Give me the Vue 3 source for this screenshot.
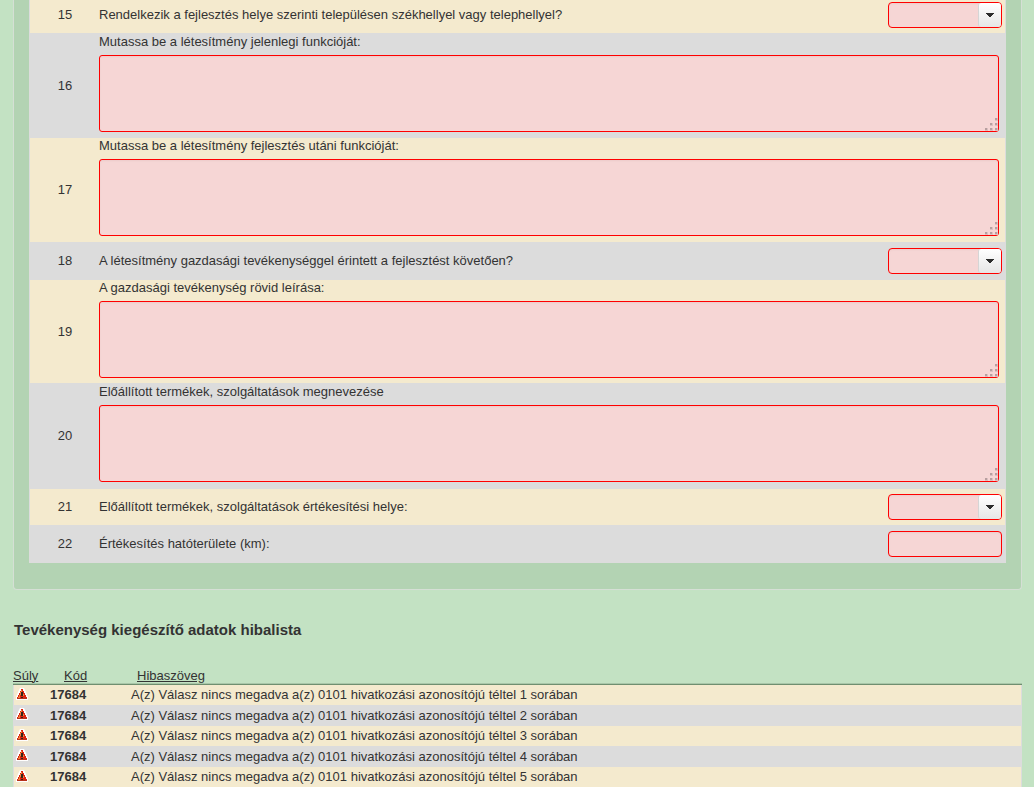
<script setup>
const rows = [
  { n: 15, label: 'Rendelkezik a fejlesztés helye szerinti településen székhellyel vagy telephellyel?', type: 'select' },
  { n: 16, label: 'Mutassa be a létesítmény jelenlegi funkcióját:', type: 'area' },
  { n: 17, label: 'Mutassa be a létesítmény fejlesztés utáni funkcióját:', type: 'area' },
  { n: 18, label: 'A létesítmény gazdasági tevékenységgel érintett a fejlesztést követően?', type: 'select' },
  { n: 19, label: 'A gazdasági tevékenység rövid leírása:', type: 'area' },
  { n: 20, label: 'Előállított termékek, szolgáltatások megnevezése', type: 'area' },
  { n: 21, label: 'Előállított termékek, szolgáltatások értékesítési helye:', type: 'select' },
  { n: 22, label: 'Értékesítés hatóterülete (km):', type: 'input' },
]
const errors = [1, 2, 3, 4, 5]
const dots = [[10, 0], [5, 5], [10, 5], [0, 10], [5, 10], [10, 10]]
</script>

<template>
  <main class="page">
    <section class="panel">
      <div class="grid">
        <div v-for="r in rows" :key="r.n" class="row" :class="r.type">
          <span class="num">{{ r.n }}</span>
          <div class="cell">
            <label :for="'f' + r.n">{{ r.label }}</label>
            <div v-if="r.type === 'area'" class="areabox">
              <textarea :id="'f' + r.n"></textarea>
              <svg class="grip" width="13" height="13" viewBox="0 0 13 13" aria-hidden="true">
                <g v-for="d in dots" :key="d.join()">
                  <rect :x="d[0]" :y="d[1]" width="3" height="3" fill="#dcc0c0" />
                  <rect :x="d[0]" :y="d[1]" width="2" height="2" fill="#b79f9f" />
                </g>
              </svg>
            </div>
            <div v-else-if="r.type === 'select'" class="selectbox">
              <select :id="'f' + r.n"><option value=""></option></select>
              <span class="trigger">
                <svg width="8" height="4" viewBox="0 0 8 4" aria-hidden="true"><path d="M0 0h8v1H7v1H6v1H5v1H3V3H2V2H1V1H0z" fill="#2b2b2b" /></svg>
              </span>
            </div>
            <input v-else :id="'f' + r.n" type="text" class="field" />
          </div>
        </div>
      </div>
    </section>

    <h2>Tevékenység kiegészítő adatok hibalista</h2>

    <table>
      <thead>
        <tr>
          <th class="c1"><a href="#">Súly</a></th>
          <th class="c2"><a href="#">Kód</a></th>
          <th class="c3"><a href="#">Hibaszöveg</a></th>
        </tr>
      </thead>
      <tbody>
        <tr v-for="e in errors" :key="e">
          <td class="icon">
            <svg width="12" height="12" viewBox="0 0 12 12" role="img" aria-label="Hiba">
              <path d="M4 0h4l1 2 1 2 1 3 1 2v3H0V9l1-2 1-3 1-2z" fill="#fff" />
              <path d="M5 1h2v2h1v2h1v2h1v2h1v2H1V9h1V7h1V5h1V3h1z" fill="#dd2410" />
              <path d="M5 2h1v2H5zM4 4h1v3H4zM3 7h1v2H3zM2 9h2v1H2zM7 6h1v2H7z" fill="#f0813a" />
              <path d="M1 10h10v1H1z" fill="#b8321c" />
              <path d="M5 4h2v4H5zM5 9h2v1H5z" fill="#33241c" />
            </svg>
          </td>
          <td class="code">17684</td>
          <td>A(z) Válasz nincs megadva a(z) 0101 hivatkozási azonosítójú téltel {{ e }} sorában</td>
        </tr>
      </tbody>
    </table>
  </main>
</template>

<style>
body { margin: 0; background: #c3e2c3; }
</style>

<style scoped>
.page {
  font: 13px/16px "Liberation Sans", Arial, sans-serif;
  color: #333;
  padding: 0 12px 0 13px;
}
.page * { box-sizing: border-box; }
.panel {
  background: #b3d3b3;
  border: 1px solid #d5dfd5;
  border-top: 0;
  border-radius: 0 0 4px 4px;
  padding: 0 15px 26px;
}
.grid { border: 1px solid #dcdcdc; border-top: 0; }
.row {
  display: grid;
  grid-template-columns: 69px 1fr;
  align-items: center;
  height: 37px;
  background: #f4eace;
  border-top: 1px solid #dcdcdc;
}
.row:nth-child(even) { background: #dcdcdc; }
.row:first-child { height: 33px; padding-bottom: 4px; border-top: 0; }
.row.area { height: 104px; }
.row.area + .row.area { height: 105px; }
.num { text-align: center; padding-left: 1px; }
.cell {
  display: flex;
  align-items: center;
  justify-content: space-between;
  padding-right: 3px;
}
.area .cell { display: block; padding-right: 6px; align-self: start; }
.area label { display: block; height: 21px; }
.areabox { position: relative; }
textarea, select, .field {
  display: block;
  margin: 0;
  background: #f6d6d5;
  border: 1px solid #f00;
  border-radius: 4px;
  outline: 0;
  font: inherit;
  box-shadow: inset 0 1px 2px #eccccb;
}
textarea { width: 100%; height: 77px; resize: none; border-radius: 3px; }
.grip { position: absolute; right: 1px; bottom: 1px; }
.selectbox { position: relative; width: 114px; }
select { width: 100%; height: 26px; appearance: none; }
.field { width: 114px; height: 26px; }
.trigger {
  position: absolute;
  top: 1px;
  right: 1px;
  bottom: 1px;
  width: 23px;
  display: flex;
  align-items: center;
  justify-content: center;
  border-left: 1px solid #d5d5d5;
  border-radius: 3px;
  background: linear-gradient(#fff, #e6e6e6);
  pointer-events: none;
}
h2 {
  margin: 31px 0 28px 1px;
  font-size: 15px;
  line-height: 18px;
}
table { width: 100%; border-collapse: separate; border-spacing: 0; }
th, td { padding: 0; text-align: left; font-weight: normal; }
th { height: 18px; border-bottom: 1px solid #6f8f70; box-shadow: inset 0 -1px #a9c7a9; }
th a { color: inherit; }
.c1 { width: 37px; }
.c2 { width: 81px; padding-left: 14px; }
.c3 { padding-left: 6px; }
td { height: 20px; background: #f4eace; }
tr:nth-child(even) td { height: 21px; background: #dcdcdc; }
td:last-child { border-right: 1px solid #dcdcdc; }
.icon { padding: 0 0 3px 2px; border-left: 1px solid #dcdcdc; }
.icon svg { display: block; }
.code { font-weight: bold; }
</style>
